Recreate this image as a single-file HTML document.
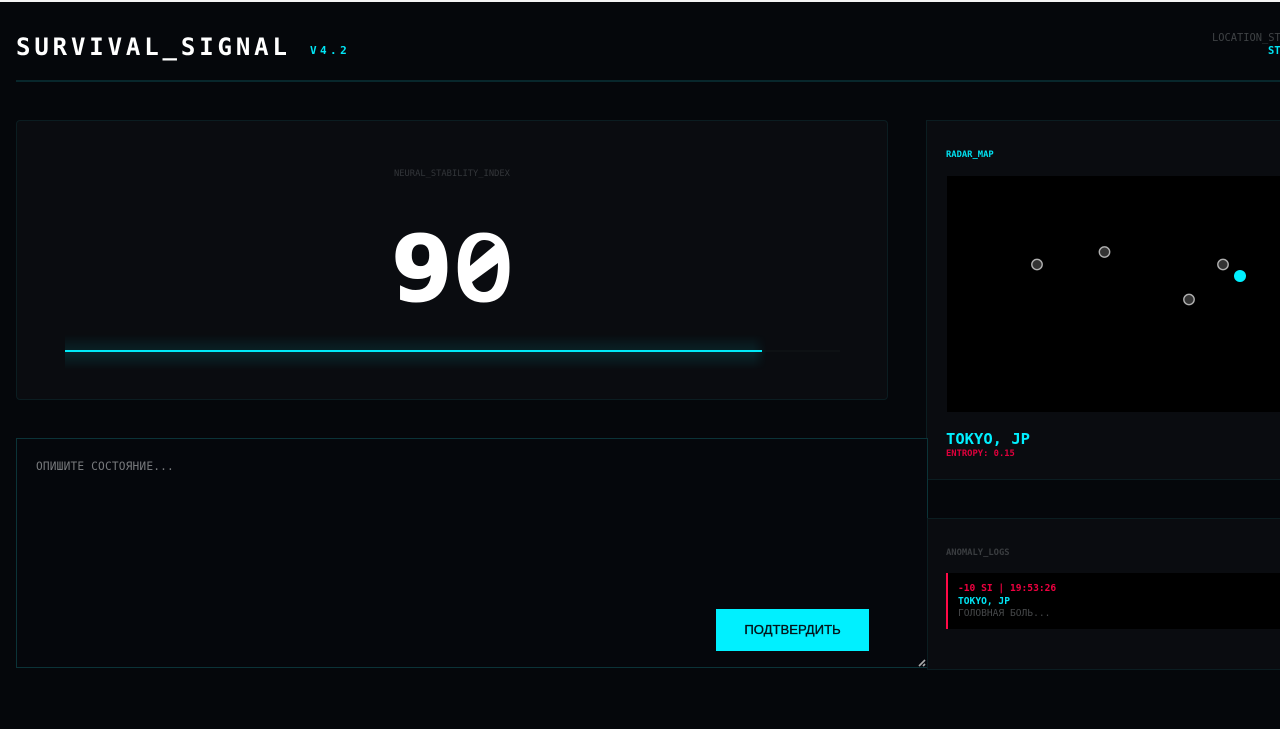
<!DOCTYPE html>
<html><head><meta charset="utf-8">
<style>
html,body{margin:0;padding:0;width:1280px;height:729px;overflow:hidden;background:#05070b}
body{position:relative;font-family:"DejaVu Sans Mono","Liberation Mono",monospace}
div{position:absolute;box-sizing:border-box;white-space:pre}
.card{background:#0a0c10;border:1px solid #0b1d21}
</style></head><body>
<div style="left:0;top:0;width:1280px;height:2px;background:#f4f4f4"></div>
<div style="left:16px;top:32px;font-size:24px;line-height:30px;font-weight:700;letter-spacing:3.87px;color:#fff">SURVIVAL_SIGNAL</div>
<div style="left:310px;top:44px;font-size:11px;line-height:14px;font-weight:700;letter-spacing:3.4px;color:#00e5f5">V4.2</div>
<div style="left:1212px;top:31px;font-size:10.4px;line-height:14px;color:#3f4245">LOCATION_STATUS</div>
<div style="left:1268px;top:44px;font-size:10.4px;line-height:14px;font-weight:700;color:#00e5f5">STABLE</div>
<div style="left:16px;top:80px;width:1264px;height:2px;background:#08272c"></div>

<div class="card" style="left:16px;top:120px;width:872px;height:280px;border-radius:4px"></div>
<div style="left:394px;top:168px;font-size:8.75px;line-height:12px;color:#33363a">NEURAL_STABILITY_INDEX</div>
<div style="left:391px;top:217px;font-size:90px;line-height:105px;font-weight:700;color:#fff;-webkit-text-stroke:2px #fff;transform:scaleX(1.14);transform-origin:0 0">90</div>
<svg style="position:absolute;left:450px;top:220px" width="70" height="90" viewBox="450 220 70 90">
<ellipse cx="484" cy="266" rx="16" ry="25" fill="#fff"/>
<path d="M470 266C470 250 476 240 484 240C489 240 493 242 495 245Z" fill="#0a0c10"/>
<path d="M472 282L498 263C498 280 494 292 484 292C478 292 474 288 472 282Z" fill="#0a0c10"/>
</svg>
<div style="left:65px;top:350px;width:775px;height:2px;background:#0e1114"></div>
<div style="left:65px;top:334px;width:702px;height:36px;background:linear-gradient(to bottom,rgba(0,240,255,0),rgba(0,240,255,.09) 46%,rgba(0,240,255,.11) 52%,rgba(0,240,255,0));-webkit-mask-image:linear-gradient(to right,#000 98%,transparent);mask-image:linear-gradient(to right,#000 98%,transparent)"></div>
<div style="left:65px;top:350px;width:697px;height:2px;background:#00eaf8"></div>

<div class="card" style="left:926px;top:120px;width:360px;height:360px"></div>
<div style="left:16px;top:438px;width:912px;height:230px;background:#05070c;border:1px solid #0b3338"></div>
<div style="left:36px;top:460px;font-size:11.2px;line-height:14px;letter-spacing:.16px;color:#77797c">ОПИШИТЕ СОСТОЯНИЕ...</div>
<div style="left:716px;top:609px;width:153px;height:42px;background:#00f0ff"></div>
<div style="left:716px;top:609px;width:153px;height:42px;line-height:42px;text-align:center;font-family:'Liberation Sans',sans-serif;font-size:13.1px;font-weight:400;color:#04141a;-webkit-text-stroke:.35px #04141a">ПОДТВЕРДИТЬ</div>

<div style="left:946px;top:149px;font-size:8.8px;line-height:12px;font-weight:700;color:#00e0f0">RADAR_MAP</div>
<div style="left:947px;top:176px;width:340px;height:236px;background:#000"></div>
<svg style="position:absolute;left:947px;top:176px" width="333" height="236">
<g fill="#333" stroke="#b0b0b0" stroke-width="1.4">
<circle cx="90" cy="88.500" r="5.200"/><circle cx="157.500" cy="76" r="5.200"/><circle cx="276" cy="88.500" r="5.200"/><circle cx="242" cy="123.500" r="5.200"/>
</g>
<circle cx="293" cy="100" r="6" fill="#00f0ff"/>
</svg>
<div style="left:946px;top:430px;font-size:15.5px;line-height:18px;font-weight:700;color:#00f0ff">TOKYO, JP</div>
<div style="left:946px;top:448px;font-size:8.8px;line-height:13px;font-weight:700;color:#e0003c">ENTROPY: 0.15</div>

<div class="card" style="left:927px;top:518px;width:360px;height:152px"></div>
<svg style="position:absolute;left:917px;top:658px" width="10" height="9" viewBox="0 0 10 9"><path d="M2 8L8 2M6 8L8 6" stroke="#aaa" stroke-width="1.6" fill="none"/></svg>
<div style="left:946px;top:547px;font-size:8.8px;line-height:12px;font-weight:700;color:#3a3d40">ANOMALY_LOGS</div>
<div style="left:946px;top:573px;width:340px;height:56px;background:#000;border-left:2px solid #ff0a47"></div>
<div style="left:958px;top:582px;font-size:9.6px;line-height:13px;font-weight:700;color:#f00040">-10 SI | 19:53:26</div>
<div style="left:958px;top:594.500px;font-size:9.6px;line-height:13px;font-weight:700;color:#00e5f5">TOKYO, JP</div>
<div style="left:958px;top:607px;font-size:9.6px;line-height:13px;color:#46484a">ГОЛОВНАЯ БОЛЬ...</div>
</body></html>
